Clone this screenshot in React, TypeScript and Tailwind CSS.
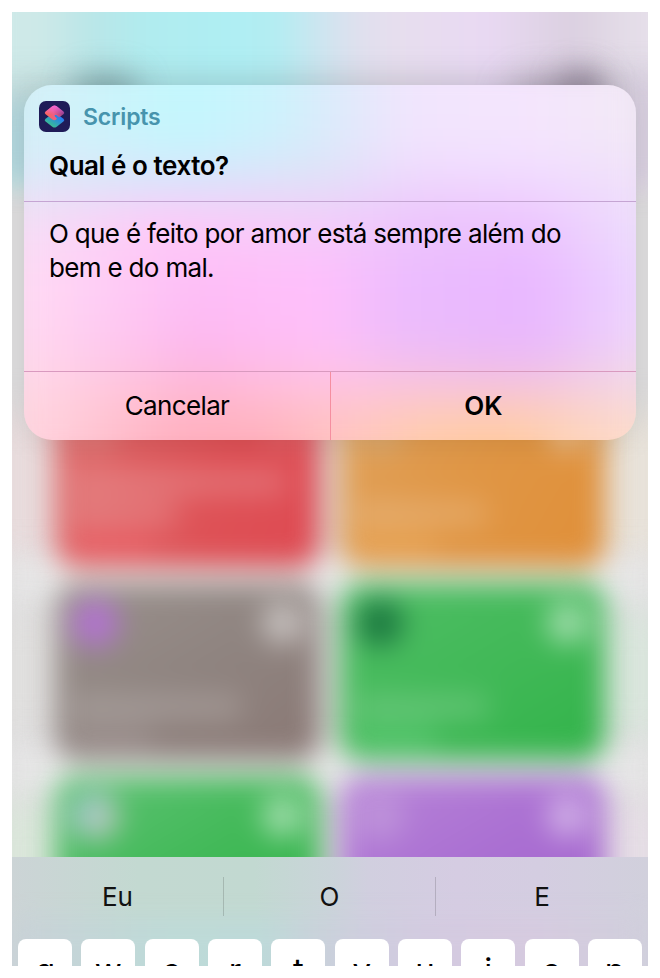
import clsx from "clsx";

const keys = ["q", "w", "e", "r", "t", "y", "u", "i", "o", "p"];

const cards = [
  { bg: "bg-[linear-gradient(100deg,#df6c6c,#de5156_60%,#de4a52)]", icon: "bg-[#df9590]/40", button: "bg-white/10", line: "w-[215px]", line2: "w-[105px]", foot: "bg-[#ec6068]" },
  { bg: "bg-[linear-gradient(120deg,#e0a25c,#e09645_50%,#e08f38)]", icon: "bg-[#d9ae7a]/70", button: "bg-white/40", line: "w-0", line2: "w-[130px]", foot: "bg-[#eaa656]" },
  { bg: "bg-[linear-gradient(150deg,#9a918d,#8f8480_50%,#8a7874)]", icon: "bg-[#b273d0]", button: "bg-white/50", line: "w-0", line2: "w-[170px]", foot: "bg-[#a09492]" },
  { bg: "bg-[linear-gradient(150deg,#50be66,#42b958_50%,#31b349)]", icon: "bg-[#1d7a41]", button: "bg-white/50", line: "w-0", line2: "w-[132px]", foot: "bg-[#5ac973]" },
  { bg: "bg-[linear-gradient(150deg,#60c376,#42b958_50%,#31b349)]", icon: "bg-[linear-gradient(120deg,#92c8d4,#c9c9b5)]", button: "bg-white/50", line: "w-0", line2: "w-0", foot: "bg-[#5ac973]" },
  { bg: "bg-[linear-gradient(150deg,#b885d8,#aa6fd2_50%,#a363cc)]", icon: "bg-[#be92da]", button: "bg-white/45", line: "w-0", line2: "w-0", foot: "bg-[#aa6fd2]" },
];

function Shortcut({ card }: { card: (typeof cards)[number] }) {
  return (
    <div className={clsx("flex h-[177px] flex-col rounded-[22px] px-4 pt-4", card.bg)}>
      <div className="flex items-center justify-between">
        <div className={clsx("size-[48px] rounded-full", card.icon)} />
        <div className={clsx("size-[42px] rounded-full", card.button)} />
      </div>
      <div className={clsx("mt-[18px] h-[22px] bg-white/20", card.line)} />
      <div className={clsx("mt-2 h-[24px] bg-white/18", card.line2)} />
      <div className={clsx("mt-1 h-[30px] w-[80px] opacity-60", card.foot)} />
    </div>
  );
}

// blurred shortcut gallery behind the alert
function Gallery() {
  return (
    <div className="absolute inset-0 overflow-hidden bg-[#dfdedf]">
      <div className="absolute -inset-x-5 -top-8 h-[206px] bg-[linear-gradient(90deg,#cee9e8_7%,#b9e6e8_15%,#b0ecef_23%,#afeef3_35%,#b3edf2_42%,#cbe6f0_48%,#dfe0ee_54%,#e7deee_60%,#e9d9f3_73%,#dbd0e0_86%,#e5dee9_95%)] blur-[11px]" />
      <div className="absolute -inset-x-5 top-[66px] h-[60px] bg-[#6f8088]/15 blur-[16px]" />
      <div className="absolute -left-6 top-[90px] h-[80px] w-[60px] bg-[#b2d6dd] blur-[14px]" />
      <div className="absolute -right-6 top-[60px] h-[115px] w-[60px] bg-[#d8cfdf] blur-[14px]" />
      <div className="absolute left-[62px] top-[64px] h-[34px] w-[64px] rounded-full bg-[#6b9093]/75 blur-[16px]" />
      <div className="absolute left-[500px] top-[70px] h-[40px] w-[90px] rounded-full bg-[#88798e]/60 blur-[18px]" />
      <div className="absolute left-[548px] top-[58px] h-[36px] w-[44px] rounded-full bg-[#75687d]/60 blur-[15px]" />
      <div className="absolute -inset-x-6 top-[400px] flex h-[150px] justify-between blur-[18px]">
        <div className="w-[80px] bg-[#e8dbdc]" />
        <div className="w-[80px] bg-[#e8e2d9]" />
      </div>
      <div className="absolute inset-x-6 top-[555px] h-[30px] bg-[#eeeeee] blur-[14px]" />
      <div className="absolute -inset-x-6 top-[545px] h-[50px] bg-[#e8e8e8]/70 blur-[16px]" />
      <div className="absolute -inset-x-6 top-[600px] flex h-[125px] justify-between blur-[18px]">
        <div className="w-[80px] bg-[#e0dfde]" />
        <div className="w-[80px] bg-[#d9e5dc]" />
      </div>
      <div className="absolute inset-x-6 top-[745px] h-[30px] bg-[#eeeeee] blur-[14px]" />
      <div className="absolute -inset-x-6 top-[735px] h-[50px] bg-[#e8e8e8]/70 blur-[16px]" />
      <div className="absolute -inset-x-6 top-[790px] flex h-[125px] justify-between blur-[18px]">
        <div className="w-[80px] bg-[#dae6da]" />
        <div className="w-[80px] bg-[#e5dde5]" />
      </div>
      <div className="absolute left-[43px] top-[378px] grid w-[550px] grid-cols-2 gap-x-[20px] gap-y-4 blur-[14px]">
        {cards.map((card, i) => (
          <Shortcut key={i} card={card} />
        ))}
      </div>
    </div>
  );
}

function AlertTint() {
  return (
    <div className="absolute -inset-x-6 -inset-y-9 -z-10 flex flex-col blur-[22px]">
      <div className="h-[96px] bg-[linear-gradient(90deg,#d5f0f8_5%,#c3f7fd_28%,#cdf2fc_42%,#dcebfa_50%,#f1e5fd_62%,#f4e5fd_80%,#f2e9f6_96%)]" />
      <div className="h-[35px] bg-[linear-gradient(90deg,#daecf9_5%,#cdeefd_28%,#dbe6f8_48%,#f0defd_62%,#f2dfff_80%,#f1e4f8_96%)]" />
      <div className="h-[30px] bg-[linear-gradient(90deg,#e7e2f6_5%,#ead8fa_25%,#e7daf8_48%,#edcffc_65%,#efd2ff_80%,#efdffb_96%)]" />
      <div className="h-[45px] bg-[linear-gradient(90deg,#f7dcf6_5%,#ffc8f8_25%,#f5cbfa_48%,#ecc2fc_65%,#ecc2fe_80%,#eddcfd_96%)]" />
      <div className="h-[60px] bg-[linear-gradient(90deg,#ffd9f4_5%,#fdbdf6_30%,#ffc0fb_48%,#ebbcfe_62%,#e9b7ff_80%,#edd7ff_98%)]" />
      <div className="h-[40px] bg-[linear-gradient(90deg,#ffd7f0_5%,#fdb8f0_30%,#ffc0f8_48%,#ebbcfb_62%,#e8b6fd_80%,#efd6fb_98%)]" />
      <div className="h-[30px] bg-[linear-gradient(90deg,#ffd7ea_5%,#fdb6e0_30%,#ffc2ea_50%,#f3bfe9_65%,#efbeeb_80%,#f1d7eb_96%)]" />
      <div className="h-[26px] bg-[linear-gradient(90deg,#ffd7e2_5%,#ffb6cc_30%,#ffc5d8_50%,#fbc8d0_65%,#f9c8ce_80%,#f5d8e0_96%)]" />
      <div className="flex-1 bg-[linear-gradient(90deg,#ffd4df_5%,#ffb2c2_26%,#ffb1be_40%,#ffc5c2_52%,#ffcdad_65%,#ffcba4_76%,#fddbcd_96%)]" />
    </div>
  );
}

function ShortcutsIcon() {
  return (
    <svg viewBox="0 0 31 31" className="size-[31px]">
      <defs>
        <linearGradient id="top" x1="0.1" y1="0.7" x2="0.95" y2="0.45">
          <stop offset="0" stopColor="#fb6458" />
          <stop offset="0.45" stopColor="#ec5f86" />
          <stop offset="1" stopColor="#8a3b8c" />
        </linearGradient>
        <linearGradient id="shine" x1="0.5" y1="0" x2="0.5" y2="0.6">
          <stop offset="0" stopColor="#f566d8" />
          <stop offset="1" stopColor="#f566d8" stopOpacity="0" />
        </linearGradient>
        <linearGradient id="bottom" x1="0.2" y1="0.9" x2="0.8" y2="0.2">
          <stop offset="0" stopColor="#3cc48a" />
          <stop offset="0.5" stopColor="#2f9cc4" />
          <stop offset="1" stopColor="#2673fb" />
        </linearGradient>
      </defs>
      <rect width="31" height="31" rx="7" fill="#1f1c58" />
      <path d="M13.6 12.4q1.9-1.4 3.8 0l7 5.3q1.8 1.4 0 2.8l-7 5.4q-1.9 1.4-3.8 0l-7-5.4q-1.8-1.4 0-2.8z" fill="url(#bottom)" />
      <path d="M13.6 5.1q1.9-1.4 3.8 0l7 5.3q1.8 1.4 0 2.8l-4.1 3.1-3.1-2.2q-1.9-.7-1.6.9.3.9 2.3 2.3l-.7 1.3q-1.9 1.4-3.8 0l-6.8-5.4q-1.8-1.4 0-2.8z" fill="url(#top)" />
      <path d="M13.6 5.1q1.9-1.4 3.8 0l7 5.3q1.8 1.4 0 2.8l-4.1 3.1-3.1-2.2q-1.9-.7-1.6.9.3.9 2.3 2.3l-.7 1.3q-1.9 1.4-3.8 0l-6.8-5.4q-1.8-1.4 0-2.8z" fill="url(#shine)" />
    </svg>
  );
}

function Alert() {
  return (
    <div className="relative isolate mx-3 mt-[73px] flex h-[355px] flex-col overflow-hidden rounded-[28px] text-black">
      <AlertTint />
      <div className="h-[117px] border-b border-[#c5a5d3]">
        <div className="flex items-center gap-[13px] pl-[15px] pt-[15px]">
          <ShortcutsIcon />
          <span className="pt-[2px] text-[23px] font-semibold leading-[31px] tracking-[-0.15px] text-[#4794ad]">Scripts</span>
        </div>
        <h1 className="pl-[25px] pt-[16px] text-[26px] font-semibold leading-[34px] tracking-[-0.45px]">Qual é o texto?</h1>
      </div>
      <p className="flex-1 pl-[25px] pr-10 pt-[15px] text-[26px] leading-[34px] tracking-[-0.67px]">
        O que é feito por amor está sempre além do bem e do mal.
      </p>
      <div className="grid h-[69px] grid-cols-2 border-t border-[#d99abf] text-[26px] leading-[68px]">
        <button className="tracking-[-0.65px]">Cancelar</button>
        <button className="border-l border-[#f58ea0] font-semibold">OK</button>
      </div>
    </div>
  );
}

function Keyboard() {
  return (
    <div className="relative mt-auto h-[109px] overflow-hidden bg-[linear-gradient(90deg,#ccd4d6,#c3d9d1_20%,#c2d9d1_38%,#cad4d9_50%,#d1cfdf_56%,#d5cce2_70%,#d4cde1_83%,#d1d0dc)]">
      <div className="absolute inset-x-0 top-[62px] h-[80px] bg-[linear-gradient(90deg,#c9d1d8,#bddbda_25%,#bddadb_40%,#cad1dc_48%,#d3cae0_65%,#d7cadf_82%,#d0cfdc)] opacity-80 blur-[12px]" />
      <div className="relative grid h-[78px] grid-cols-[211px_213px_1fr] items-center text-center text-[26px] text-[#111]">
        <span>Eu</span>
        <span className="border-x border-black/15 leading-[39px]">O</span>
        <span>E</span>
      </div>
      <div className="relative mx-[6px] mt-[4px] grid grid-cols-10 gap-[9.2px]">
        {keys.map((k) => (
          <div key={k} className="h-[84px] rounded-[8px] bg-white pt-[8px] text-center text-[33px] leading-[46px] text-black">
            {k}
          </div>
        ))}
      </div>
    </div>
  );
}

export default function App() {
  return (
    <div className="h-[978px] w-[660px] bg-white p-3 font-['Inter','Liberation_Sans',sans-serif]">
      <div className="relative isolate flex h-[954px] flex-col overflow-hidden">
        <div className="absolute inset-0 -z-10">
          <Gallery />
          <div className="absolute left-3 top-[73px] h-[355px] w-[612px] rounded-[28px] shadow-[0_0_34px_rgba(0,0,0,0.1)]" />
        </div>
        <Alert />
        <Keyboard />
      </div>
    </div>
  );
}
